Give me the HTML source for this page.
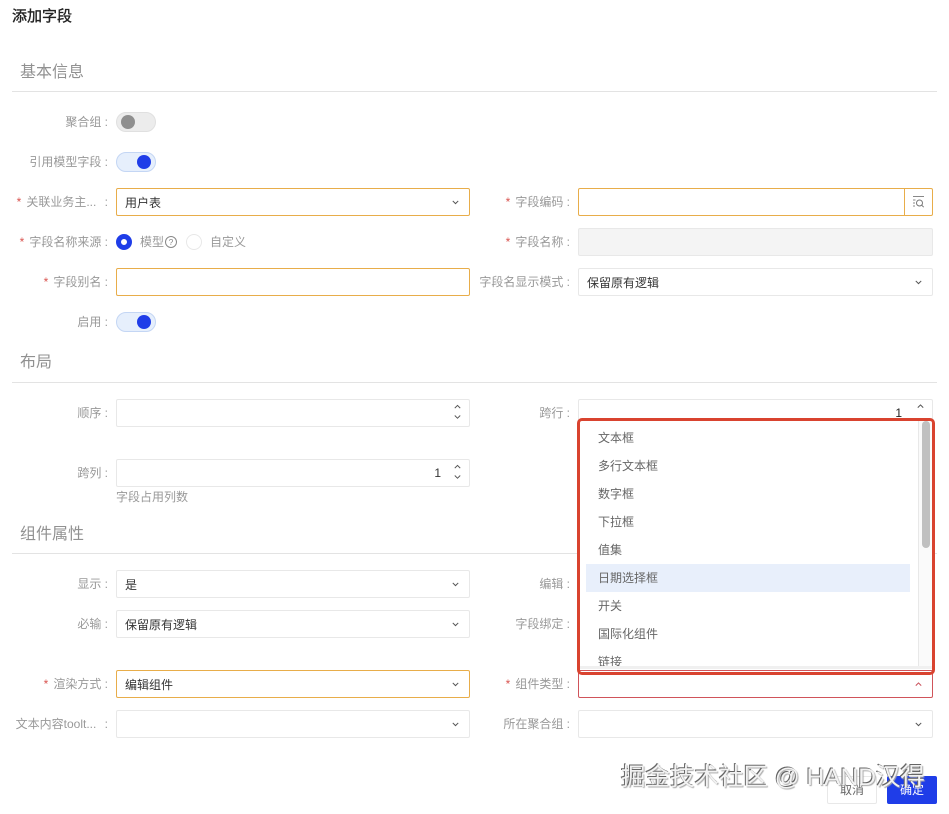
<!DOCTYPE html>
<html lang="zh"><head><meta charset="utf-8"><style>
html,body{margin:0;padding:0;background:#fff}
body{width:949px;height:814px;position:relative;overflow:hidden;font-family:"Liberation Sans","Noto Sans CJK SC",sans-serif;font-size:12px;color:#222;filter:blur(.3px)}
div,span{box-sizing:border-box}
.a{position:absolute}
.h{position:absolute;left:20px;font-size:16px;line-height:24px;color:#919191;white-space:nowrap}
.hr{position:absolute;left:12px;width:925px;height:1px;background:#e3e3e3}
.l{position:absolute;height:28px;line-height:28px;color:#999;text-align:right;white-space:nowrap;font-size:12px}
.l.L{left:0;width:108px}.l.R{left:460px;width:110px}
.l i{font-style:normal;color:#d9534f;margin-right:5px}
.l b{font-weight:400;margin-left:5px}
.b{position:absolute;height:28px;width:354px;left:116px;border:1px solid #e8e8e8;border-radius:2px;background:#fff;line-height:28px;padding-left:8px;color:#333;white-space:nowrap}
.b.R{left:578px;width:355px}
.b.o{border-color:#e8ad4a}
.c{position:absolute;right:10px;top:11px;width:7px;height:5px}
.s{position:absolute;right:8px;top:4px;width:7px;height:16px}
.sw{position:absolute;left:116px;width:40px;height:20px;border-radius:10px;border:1px solid #c4d6f4;background:#e6effc}
.sw span{position:absolute;right:4px;top:2px;width:14px;height:14px;border-radius:50%;background:#1f3de8}
.sw.off{border-color:#e0e0e0;background:#ececec}
.sw.off span{left:4px;right:auto;background:#8f8f8f}
.it{position:absolute;left:598px;height:28px;line-height:28px;color:#666;white-space:nowrap;font-size:12px}
</style></head><body>
<div class="a" style="left:12px;top:6px;font-size:15px;line-height:22px;color:#222;-webkit-text-stroke:.35px #222">添加字段</div>

<div class="h" style="top:61px">基本信息</div><div class="hr" style="top:91px"></div>
<div class="l L" style="top:108px">聚合组 :</div><div class="sw off" style="top:112px"><span></span></div>
<div class="l L" style="top:148px">引用模型字段 :</div><div class="sw" style="top:152px"><span></span></div>
<div class="l L" style="top:188px"><i>*</i>关联业务主...<b> :</b></div>
<div class="b o" style="top:188px">用户表<svg class="c" viewBox="0 0 9 6"><path d="M1 1l3.5 3.5L8 1" fill="none" stroke="#555" stroke-width="1.3"/></svg></div>
<div class="l R" style="top:188px"><i>*</i>字段编码 :</div>
<div class="b R o" style="top:188px"><div class="a" style="right:27px;top:0;width:1px;height:26px;background:#e8ad4a"></div>
<svg class="a" style="right:7px;top:6px" width="13" height="14" viewBox="0 0 13 14"><path d="M1 1.5h11M1 5h2.500M1 8h2M1 11h2" fill="none" stroke="#888" stroke-width="1"/><circle cx="7.500" cy="8" r="3" fill="none" stroke="#777"/><path d="M9.700 10.200l2 2" stroke="#777"/></svg></div>
<div class="l L" style="top:228px"><i>*</i>字段名称来源 :</div>
<div class="a" style="left:116px;top:234px;width:16px;height:16px;border-radius:50%;border:5px solid #1f3de8;background:#fff"></div>
<div class="a" style="left:140px;top:228px;line-height:28px;color:#999">模型</div>
<svg class="a" style="left:165px;top:236px" width="12" height="12" viewBox="0 0 12 12"><circle cx="6" cy="6" r="5.500" fill="none" stroke="#888"/><text x="6" y="9" font-size="8.500" text-anchor="middle" fill="#888" font-family="Liberation Sans">?</text></svg>
<div class="a" style="left:186px;top:234px;width:16px;height:16px;border-radius:50%;border:1px solid #e8e8e8"></div>
<div class="a" style="left:210px;top:228px;line-height:28px;color:#999">自定义</div>
<div class="l R" style="top:228px"><i>*</i>字段名称 :</div>
<div class="b R" style="top:228px;background:#f4f4f4"></div>
<div class="l L" style="top:268px"><i>*</i>字段别名 :</div><div class="b o" style="top:268px"></div>
<div class="l R" style="top:268px">字段名显示模式 :</div>
<div class="b R" style="top:268px">保留原有逻辑<svg class="c" viewBox="0 0 9 6"><path d="M1 1l3.5 3.5L8 1" fill="none" stroke="#555" stroke-width="1.3"/></svg></div>
<div class="l L" style="top:308px">启用 :</div><div class="sw" style="top:312px"><span></span></div>

<div class="h" style="top:351px">布局</div><div class="hr" style="top:382px"></div>
<div class="l L" style="top:399px">顺序 :</div>
<div class="b" style="top:399px"><svg class="s" viewBox="0 0 9 19"><path d="M1 4.500L4.500 1 8 4.500M1 14l3.500 3.500L8 14" fill="none" stroke="#555" stroke-width="1.200"/></svg></div>
<div class="l R" style="top:399px">跨行 :</div>
<div class="b R" style="top:399px"><span class="a" style="right:30px;top:0;color:#222;line-height:27px">1</span><svg class="a" style="right:8px;top:4px" width="7" height="5" viewBox="0 0 9 6"><path d="M1 4.500L4.500 1 8 4.500" fill="none" stroke="#555" stroke-width="1.300"/></svg></div>
<div class="l L" style="top:459px">跨列 :</div>
<div class="b" style="top:459px"><span class="a" style="right:28px;top:0;color:#333;line-height:27px">1</span><svg class="s" viewBox="0 0 9 19"><path d="M1 4.500L4.500 1 8 4.500M1 14l3.500 3.500L8 14" fill="none" stroke="#555" stroke-width="1.200"/></svg></div>
<div class="a" style="left:116px;top:488px;line-height:18px;color:#999">字段占用列数</div>

<div class="h" style="top:523px">组件属性</div><div class="hr" style="top:553px"></div>
<div class="l L" style="top:570px">显示 :</div>
<div class="b" style="top:570px">是<svg class="c" viewBox="0 0 9 6"><path d="M1 1l3.5 3.5L8 1" fill="none" stroke="#555" stroke-width="1.3"/></svg></div>
<div class="l R" style="top:570px">编辑 :</div>
<div class="l L" style="top:610px">必输 :</div>
<div class="b" style="top:610px">保留原有逻辑<svg class="c" viewBox="0 0 9 6"><path d="M1 1l3.5 3.5L8 1" fill="none" stroke="#555" stroke-width="1.3"/></svg></div>
<div class="l R" style="top:610px">字段绑定 :</div>
<div class="l L" style="top:670px"><i>*</i>渲染方式 :</div>
<div class="b o" style="top:670px">编辑组件<svg class="c" viewBox="0 0 9 6"><path d="M1 1l3.5 3.5L8 1" fill="none" stroke="#555" stroke-width="1.3"/></svg></div>
<div class="l R" style="top:670px"><i>*</i>组件类型 :</div>
<div class="b R" style="top:670px;border-color:#d0545a"><svg class="c" viewBox="0 0 9 6"><path d="M1 4.500L4.500 1 8 4.500" fill="none" stroke="#c9505a" stroke-width="1.300"/></svg></div>
<div class="l L" style="top:710px">文本内容toolt...<b> :</b></div>
<div class="b" style="top:710px"><svg class="c" viewBox="0 0 9 6"><path d="M1 1l3.5 3.5L8 1" fill="none" stroke="#555" stroke-width="1.3"/></svg></div>
<div class="l R" style="top:710px">所在聚合组 :</div>
<div class="b R" style="top:710px"><svg class="c" viewBox="0 0 9 6"><path d="M1 1l3.5 3.5L8 1" fill="none" stroke="#555" stroke-width="1.3"/></svg></div>

<!-- dropdown -->
<div class="a" style="left:579px;top:420px;width:354px;height:248px;background:#fff"></div>
<div class="a" style="left:918px;top:421px;width:15px;height:246px;background:#fafafa;border-left:1px solid #e8e8e8"></div>
<div class="a" style="left:922px;top:421px;width:8px;height:127px;background:#c0c0c0;border-radius:4px"></div>
<div class="a" style="left:586px;top:564px;width:324px;height:28px;background:#e8effb"></div>
<div class="it" style="top:424px">文本框</div>
<div class="it" style="top:452px">多行文本框</div>
<div class="it" style="top:480px">数字框</div>
<div class="it" style="top:508px">下拉框</div>
<div class="it" style="top:536px">值集</div>
<div class="it" style="top:564px">日期选择框</div>
<div class="it" style="top:592px">开关</div>
<div class="it" style="top:620px">国际化组件</div>
<div class="a" style="left:579px;top:648px;width:339px;height:19px;overflow:hidden"><div style="position:absolute;left:19px;top:0;line-height:28px;color:#666">链接</div></div>
<div class="a" style="left:579px;top:666px;width:354px;height:3px;background:#f0f0f0"></div>
<div class="a" style="left:577px;top:418px;width:358px;height:257px;border:3px solid #d9432f;border-radius:5px"></div>

<!-- footer -->
<div class="a" style="left:827px;top:776px;width:50px;height:28px;border:1px solid #e8e8e8;border-radius:2px;text-align:center;line-height:27px;color:#666;background:#fff">取消</div>
<div class="a" style="left:887px;top:776px;width:50px;height:28px;border-radius:2px;text-align:center;line-height:28px;color:#fff;background:#1f3de8">确定</div>
<div class="a" style="left:621px;top:762px;font-size:24.500px;line-height:32px;color:#f2f2f2;white-space:nowrap;text-shadow:-1px -1px 0 #666,1px 1px 1px #aaa">掘金技术社区 @ HAND汉得</div>
</body></html>
